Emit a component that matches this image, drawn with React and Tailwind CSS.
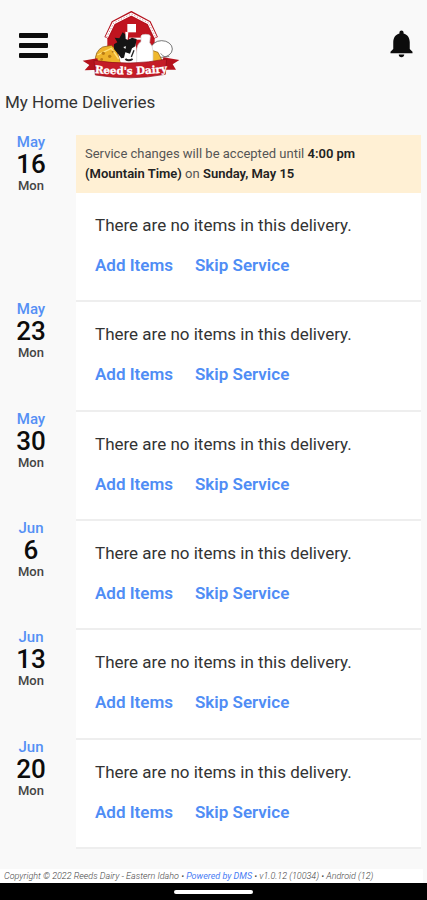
import React from 'react';
import { MdNotifications } from 'react-icons/md';

const deliveries = [
  { id: 1, month: 'May', day: 16, weekday: 'Mon', notice: true },
  { id: 2, month: 'May', day: 23, weekday: 'Mon' },
  { id: 3, month: 'May', day: 30, weekday: 'Mon' },
  { id: 4, month: 'Jun', day: 6, weekday: 'Mon' },
  { id: 5, month: 'Jun', day: 13, weekday: 'Mon' },
  { id: 6, month: 'Jun', day: 20, weekday: 'Mon' },
];

const Logo = () => (
  <svg viewBox="20 16 294 210" className="w-[98px] h-[70px]" role="img" aria-label="Reed's Dairy">
    {/* barn */}
    <path d="M168 24 L218 50 L238 96 V165 H96 V96 L117 50 Z" fill="#c0141f" />
    <path d="M94 97 L115 52 L168 24 L220 52 L241 97" fill="none" stroke="#b5121d" strokeWidth="15" />
    <path d="M94 95 L115 52 L168 25 L220 52 L241 95" fill="none" stroke="#fff" strokeWidth="8" />
    <path d="M94 95 L115 52 L168 25 L220 52 L241 95" fill="none" stroke="#d98a8f" strokeWidth="3" strokeDasharray="4 5" />
    <rect x="156" y="55" width="26" height="25" fill="#fff" />
    <path d="M162 99 H200" stroke="#fff" strokeWidth="6" />
    {/* eggs and butter on the right */}
    <ellipse cx="259" cy="130" rx="32" ry="25" fill="#fff" stroke="#333" strokeWidth="2" />
    <path d="M222 170 L230 134 L248 140 L262 168 Z" fill="#efb82e" stroke="#8a5a10" strokeWidth="2" />
    <path d="M256 143 Q266 158 282 152" fill="none" stroke="#555" strokeWidth="2" />
    {/* cheese */}
    <path d="M60 170 Q58 136 82 124 L108 119 Q128 132 137 174 Z" fill="#eeb32b" stroke="#7a4c0c" strokeWidth="2" />
    <path d="M66 148 L108 128 L130 160" fill="none" stroke="#ffe07a" strokeWidth="4" />
    <circle cx="84" cy="143" r="5" fill="#b97b14" />
    <circle cx="103" cy="152" r="5" fill="#b97b14" />
    <circle cx="79" cy="161" r="4" fill="#b97b14" />
    <circle cx="112" cy="138" r="3" fill="#b97b14" />
    {/* cow */}
    <path d="M122 122 L180 110 L190 178 H138 Z" fill="#fff" />
    <path d="M118 96 L132 98 L142 80 L150 86 L156 104 L170 96 L184 100 L180 122 L170 128 L164 144 L150 140 L146 156 L138 158 L128 144 L116 130 L116 116 L126 110 Z" fill="#151515" />
    <path d="M150 78 L159 80 L157 102 L151 100 Z" fill="#fff" />
    <path d="M144 124 L152 122 L150 130 Z" fill="#fff" />
    <path d="M150 160 Q160 168 172 160" fill="none" stroke="#222" strokeWidth="6" />
    <path d="M176 134 L168 154" stroke="#222" strokeWidth="4" />
    {/* milk bottle */}
    <path d="M197 91 Q198 86 211 86 Q224 86 225 91 L223 111 Q233 122 233 136 V180 H184 V138 Q184 115 197 108 Z" fill="#fff" stroke="#ccc" strokeWidth="2" />
    {/* ribbon */}
    <path d="M22 165 L66 158 L74 192 L28 194 L42 178 Z" fill="#b5121d" />
    <path d="M312 163 L264 155 L258 192 L302 192 L292 176 Z" fill="#b5121d" />
    <path d="M56 164 Q165 182 274 160 L270 206 Q165 226 60 208 Z" fill="#c41c27" stroke="#8d0d16" strokeWidth="2" />
    <path id="ribbon-line" d="M60 202 Q165 212 274 199" fill="none" />
    <text fill="#fff" stroke="#fff" strokeWidth="1" className="font-['DejaVu_Serif',serif] font-bold text-[31px]">
      <textPath href="#ribbon-line" startOffset="50%" textAnchor="middle">Reed's Dairy</textPath>
    </text>
  </svg>
);

const Header = () => (
  <header className="flex items-start justify-between pl-[19px] pr-[9px] pt-[11px] h-[90px]">
    <div className="flex items-start gap-[34px]">
      <button type="button" aria-label="Menu" className="flex flex-col gap-[5px] pt-[22px]">
        <span className="block w-[29px] h-[5px] rounded-[1px] bg-[#0c0c0c]" />
        <span className="block w-[29px] h-[5px] rounded-[1px] bg-[#0c0c0c]" />
        <span className="block w-[29px] h-[5px] rounded-[1px] bg-[#0c0c0c]" />
      </button>
      <Logo />
    </div>
    <button type="button" aria-label="Notifications" className="pt-4 text-[#0c0c0c]">
      <MdNotifications size={33} />
    </button>
  </header>
);

const Delivery = ({ delivery }) => (
  <li className="flex grow">
    <div className="w-[62px] shrink-0 mr-[14px] text-center font-medium">
      <p className="text-[15px] leading-[14px] text-[#5590f5]">{delivery.month}</p>
      <p className="text-[26px] leading-[30px] text-[#0c0c0c]">{delivery.day}</p>
      <p className="text-[13px] leading-[14px] text-[#444]">{delivery.weekday}</p>
    </div>

    <div className="flex-1 bg-white border-b-2 border-[#eeeeee]">
      {delivery.notice && (
        <p className="bg-[#fff0d4] px-[9px] py-[9px] text-[13px] leading-5 text-[#555]">
          Service changes will be accepted until{' '}
          <b className="font-semibold text-[#222]">4:00 pm</b>{' '}
          <b className="font-semibold text-[#222]">(Mountain Time)</b> on{' '}
          <b className="font-semibold text-[#222]">Sunday, May 15</b>
        </p>
      )}
      <div className="pl-[19px] pr-4 pt-5 pb-[23px]">
        <p className="text-[17px] leading-6 text-[#333]">There are no items in this delivery.</p>
        <div className="flex gap-[22px] mt-4 text-[17px] leading-6 font-semibold text-[#4f8df5]">
          <button type="button">Add Items</button>
          <button type="button">Skip Service</button>
        </div>
      </div>
    </div>
  </li>
);

const App = () => {
  return (
    <div className="min-h-screen flex flex-col bg-[#f9f9f9] font-[Roboto,sans-serif]">
      <Header />

      <main className="flex-1 flex flex-col pr-[6px]">
        <h1 className="pl-[5px] pb-5 text-[17px] leading-[25px] text-[#333]">My Home Deliveries</h1>
        <ul className="flex-1 flex flex-col">
          {deliveries.map((d) => (
            <Delivery key={d.id} delivery={d} />
          ))}
        </ul>
      </main>

      <footer className="mt-5">
        <p className="bg-white pl-1 mr-1 text-[9px] leading-[14px] font-light italic text-[#444]">
          Copyright © 2022 Reeds Dairy - Eastern Idaho • <a href="#dms" className="font-normal text-[#4a7df4]">Powered by DMS</a> • v1.0.12 (10034) • Android (12)
        </p>
        <div className="bg-black h-[17px] flex items-center justify-center">
          <span className="block w-[79px] h-1 rounded-full bg-white" />
        </div>
      </footer>
    </div>
  );
};

export default App;
